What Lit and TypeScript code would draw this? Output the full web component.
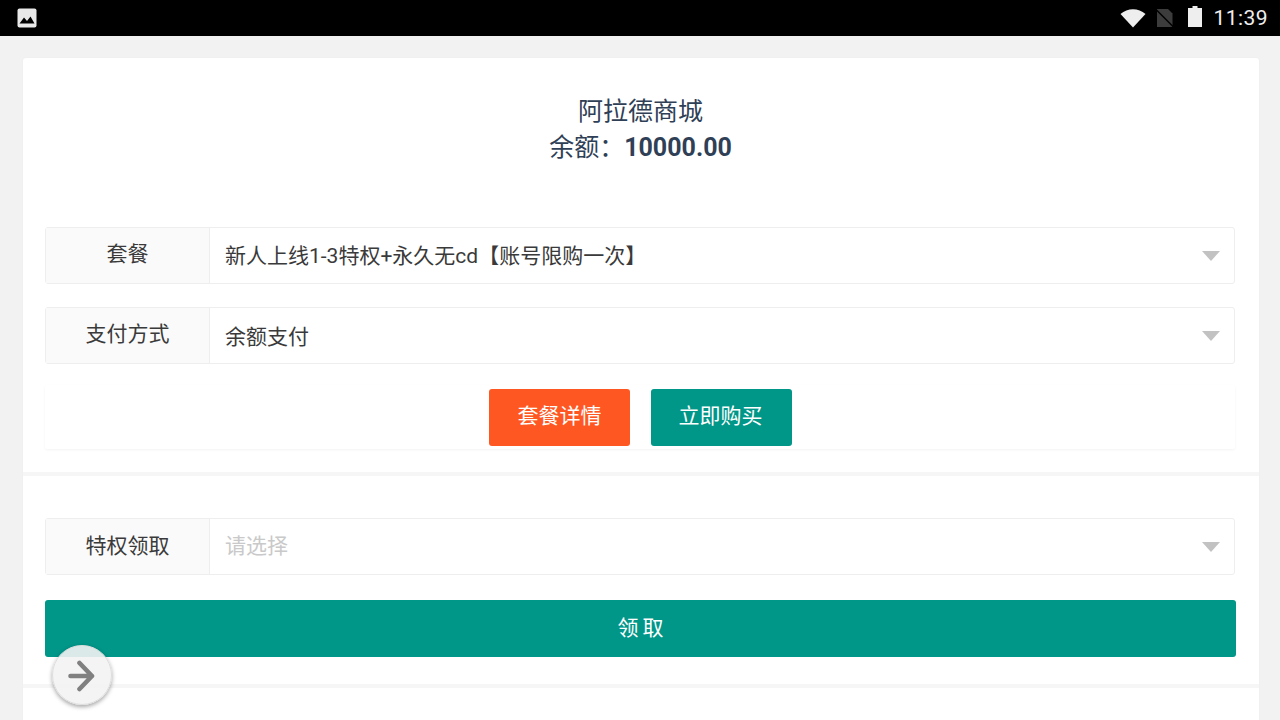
import { LitElement, html, css } from "lit";
import { customElement } from "lit/decorators.js";

@customElement("app-root")
export class AppRoot extends LitElement {
  static styles = css`
    :host {
      display: block;
      position: relative;
      width: 1280px;
      height: 720px;
      overflow: hidden;
      background: #f2f2f2;
      font-family: Roboto, "Noto Sans CJK SC", sans-serif;
      color: #3a3a3a;
    }
    .status {
      height: 36px;
      background: #000;
      display: flex;
      align-items: center;
      padding: 0 12px 0 17px;
      color: #eee;
    }
    .status .spacer { flex: 1; }
    .status svg { display: block; }
    .wifi { margin-right: 9px; }
    .sim { margin-right: 14px; }
    .batt { margin-right: 11px; margin-bottom: 3px; }
    .time { font-size: 21px; letter-spacing: 0.45px; line-height: 36px; }
    .page {
      padding: 22px 21px 0 23px;
    }
    .card {
      background: #fff;
      border-radius: 3px;
      height: 700px;
      box-shadow: 0 0 2px rgba(0, 0, 0, 0.04);
    }
    .head {
      height: 169px;
      box-sizing: border-box;
      padding: 36px 1px 0 0;
      text-align: center;
      color: #2f4056;
      font-size: 25px;
      line-height: 36px;
    }
    .head b { font-weight: 700; }
    .sec {
      padding: 0 24px 0 22px;
    }
    .row {
      display: flex;
      height: 57px;
      box-sizing: border-box;
      border: 1px solid #eee;
      border-radius: 3px;
      margin-bottom: 23px;
      font-size: 21px;
    }
    .label {
      width: 164px;
      box-sizing: border-box;
      flex: none;
      background: #fafafa;
      border-right: 1px solid #eee;
      text-align: center;
      line-height: 52px;
    }
    .value {
      flex: 1;
      padding-left: 15px;
      line-height: 56px;
      position: relative;
      white-space: nowrap;
    }
    .ph { color: #c9c9c9; }
    .caret {
      position: absolute;
      right: 14px;
      top: 23px;
      width: 0;
      height: 0;
      border-left: 9px solid transparent;
      border-right: 9px solid transparent;
      border-top: 10px solid #c2c2c2;
    }
    .row.tall .label { line-height: 52px; }
    .row.tall .value { line-height: 58px; }
    .row.third .label, .row.third .value { line-height: 54px; }
    .actions {
      margin-top: -2px;
      height: 64px;
      box-sizing: border-box;
      padding-top: 4px;
      display: flex;
      justify-content: center;
      gap: 21px;
      box-shadow: 0 1px 3px rgba(0, 0, 0, 0.05);
      border-radius: 2px;
    }
    .btn {
      width: 141px;
      height: 57px;
      border-radius: 3px;
      color: #fff;
      font-size: 21px;
      line-height: 55px;
      text-align: center;
      box-sizing: border-box;
    }
    .orange { background: #ff5722; padding-left: 1px; }
    .teal { background: #009688; padding-right: 1px; }
    .break {
      height: 4px;
      background: #f6f6f6;
      margin-top: 23px;
    }
    .sec2 { padding-top: 42px; }
    .sec2 .row { margin-bottom: 25px; }
    .wide {
      margin-right: -1px;
      height: 57px;
      box-sizing: border-box;
      padding-left: 4px;
      background: #009688;
      border-radius: 3px;
      color: #fff;
      text-align: center;
      font-size: 21px;
      line-height: 56px;
      letter-spacing: 4px;
    }
    .break2 { margin-top: 27px; }
    .fab {
      position: absolute;
      left: 52px;
      top: 645px;
      width: 60px;
      height: 60px;
      box-sizing: border-box;
      border-radius: 50%;
      background: rgba(243, 243, 243, 0.9);
      border: 1px solid #ddd;
      box-shadow: 0 2px 4px rgba(0, 0, 0, 0.35);
      display: flex;
      align-items: center;
      justify-content: center;
    }
  `;

  render() {
    return html`
      <div class="status">
        <svg width="20" height="20" viewBox="0 0 20 20">
          <rect x="0.5" y="0.5" width="19" height="19" rx="2" fill="#e8e8e8"></rect>
          <path d="M2.5 15.5 L7 9.5 L10 13 L13.5 8.5 L17.5 15.5 Z" fill="#000"></path>
        </svg>
        <span class="spacer"></span>
        <svg class="wifi" width="26" height="20" viewBox="0 0 26 20">
          <path d="M0.5 6 C7.5 -0.5 18.5 -0.5 25.5 6 L13 19.5 Z" fill="#eee"></path>
        </svg>
        <svg class="sim" width="19" height="18" viewBox="0 0 19 18">
          <path d="M2 0 H13 L17.5 4.5 V18 H2 Z" fill="#3c3c3c"></path>
          <path d="M0.5 0 L18.5 18" stroke="#000" stroke-width="1.4"></path>
        </svg>
        <svg class="batt" width="14" height="21" viewBox="0 0 14 21">
          <path d="M4.5 0 H9.5 V2 H14 V21 H0 V2 H4.5 Z" fill="#eee"></path>
        </svg>
        <span class="time">11:39</span>
      </div>
      <div class="page">
        <div class="card">
          <div class="head">
            <div>阿拉德商城</div>
            <div>余额：<b>10000.00</b></div>
          </div>
          <div class="sec">
            <div class="row">
              <div class="label">套餐</div>
              <div class="value">新人上线1-3特权+永久无cd【账号限购一次】<i class="caret"></i></div>
            </div>
            <div class="row tall">
              <div class="label">支付方式</div>
              <div class="value">余额支付<i class="caret"></i></div>
            </div>
            <div class="actions">
              <div class="btn orange">套餐详情</div>
              <div class="btn teal">立即购买</div>
            </div>
          </div>
          <div class="break"></div>
          <div class="sec sec2">
            <div class="row third">
              <div class="label">特权领取</div>
              <div class="value"><span class="ph">请选择</span><i class="caret"></i></div>
            </div>
            <div class="wide">领取</div>
          </div>
          <div class="break break2"></div>
        </div>
      </div>
      <div class="fab">
        <svg width="32" height="34" viewBox="0 0 32 34" fill="none" stroke="#808080" stroke-width="4.6" stroke-linecap="round" stroke-linejoin="round">
          <path d="M4.5 18 H26 M13.5 5 L26 18 L13.5 31"></path>
        </svg>
      </div>
    `;
  }
}
